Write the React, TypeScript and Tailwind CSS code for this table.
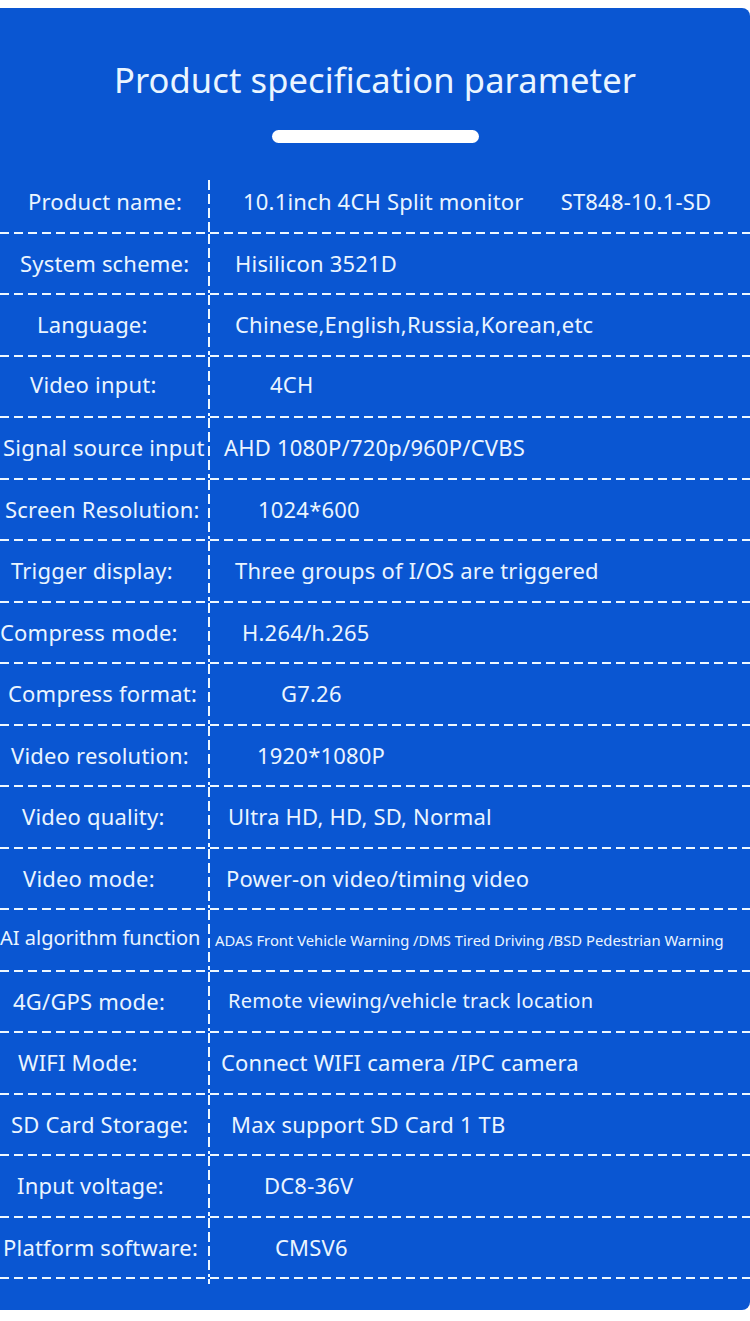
const rows = [
  { label: "Product name:", lp: "pl-[28px]", value: "10.1inch 4CH Split monitor", vp: "pl-[33px]", extra: "ST848-10.1-SD" },
  { label: "System scheme:", lp: "pl-[20px]", value: "Hisilicon 3521D", vp: "pl-[25px]" },
  { label: "Language:", lp: "pl-[37px]", value: "Chinese,English,Russia,Korean,etc", vp: "pl-[25px]" },
  { label: "Video input:", lp: "pl-[30px]", value: "4CH", vp: "pl-[60px]", up: true },
  { label: "Signal source input", lp: "pl-[3px]", value: "AHD 1080P/720p/960P/CVBS", vp: "pl-[14px]" },
  { label: "Screen Resolution:", lp: "pl-[5px]", value: "1024*600", vp: "pl-[48px]" },
  { label: "Trigger display:", lp: "pl-[11px]", value: "Three groups of I/OS are triggered", vp: "pl-[25px]" },
  { label: "Compress mode:", lp: "pl-[0px]", value: "H.264/h.265", vp: "pl-[32px]" },
  { label: "Compress format:", lp: "pl-[8px]", value: "G7.26", vp: "pl-[71px]" },
  { label: "Video resolution:", lp: "pl-[11px]", value: "1920*1080P", vp: "pl-[47px]" },
  { label: "Video quality:", lp: "pl-[22px]", value: "Ultra HD, HD, SD, Normal", vp: "pl-[18px]" },
  { label: "Video mode:", lp: "pl-[23px]", value: "Power-on video/timing video", vp: "pl-[16px]" },
  { label: "AI algorithm function", lp: "pl-[0px]", value: "ADAS Front Vehicle Warning /DMS Tired Driving /BSD Pedestrian Warning", vp: "pl-[5px]", small: true, up: true },
  { label: "4G/GPS mode:", lp: "pl-[13px]", value: "Remote viewing/vehicle track location", vp: "pl-[18px]", mid: true },
  { label: "WIFI Mode:", lp: "pl-[18px]", value: "Connect WIFI camera /IPC camera", vp: "pl-[11px]" },
  { label: "SD Card Storage:", lp: "pl-[11px]", value: "Max support SD Card 1 TB", vp: "pl-[21px]" },
  { label: "Input voltage:", lp: "pl-[17px]", value: "DC8-36V", vp: "pl-[54px]" },
  { label: "Platform software:", lp: "pl-[3px]", value: "CMSV6", vp: "pl-[65px]" },
];

const hLine = "h-[2px] w-full bg-[repeating-linear-gradient(90deg,#eef7ff_0_9px,transparent_9px_14px)]";
const vLine = "w-[2px] shrink-0 bg-[repeating-linear-gradient(180deg,#eef7ff_0_10px,transparent_10px_14px)]";

export default function App() {
  return (
    <div className="min-h-screen bg-white pt-[8px] font-['Noto_Sans','Open_Sans',sans-serif] text-[#eaf5ff]">
      <div className="h-[1302px] bg-[#0a56d2] rounded-r-[8px]">
        <h1 className="pt-[47px] text-center text-[34.5px] leading-[50px] tracking-[0.1px]">
          Product specification parameter
        </h1>
        <div className="mx-auto mt-[25px] h-[13px] w-[207px] rounded-full bg-white" />
        <div className="mt-[29px]">
          {rows.map((r, i) => (
            <div key={i}>
              <div className="flex h-[59.5px]">
                <div
                  className={`flex w-[208px] shrink-0 items-center whitespace-nowrap ${r.lp} ${
                    r.small ? "text-[20px]" : "text-[22px] tracking-[0.2px]"
                  } ${r.up ? "pb-[4px]" : ""}`}
                >
                  {r.label}
                </div>
                <div className={`${vLine} ${i === 0 ? "mt-[8px]" : ""}`} />
                <div
                  className={`flex flex-1 items-center whitespace-nowrap ${r.vp} ${
                    r.small
                      ? "text-[14.8px]"
                      : r.mid
                      ? "text-[20px] tracking-[0.3px]"
                      : "text-[22px] tracking-[0.2px]"
                  } ${r.up && !r.small ? "pb-[4px]" : ""}`}
                >
                  <span>{r.value}</span>
                  {r.extra && <span className="ml-[37px]">{r.extra}</span>}
                </div>
              </div>
              <div className={hLine} />
            </div>
          ))}
          <div className="ml-[208px] h-[5px] w-[2px] bg-[#eef7ff]" />
        </div>
      </div>
    </div>
  );
}
